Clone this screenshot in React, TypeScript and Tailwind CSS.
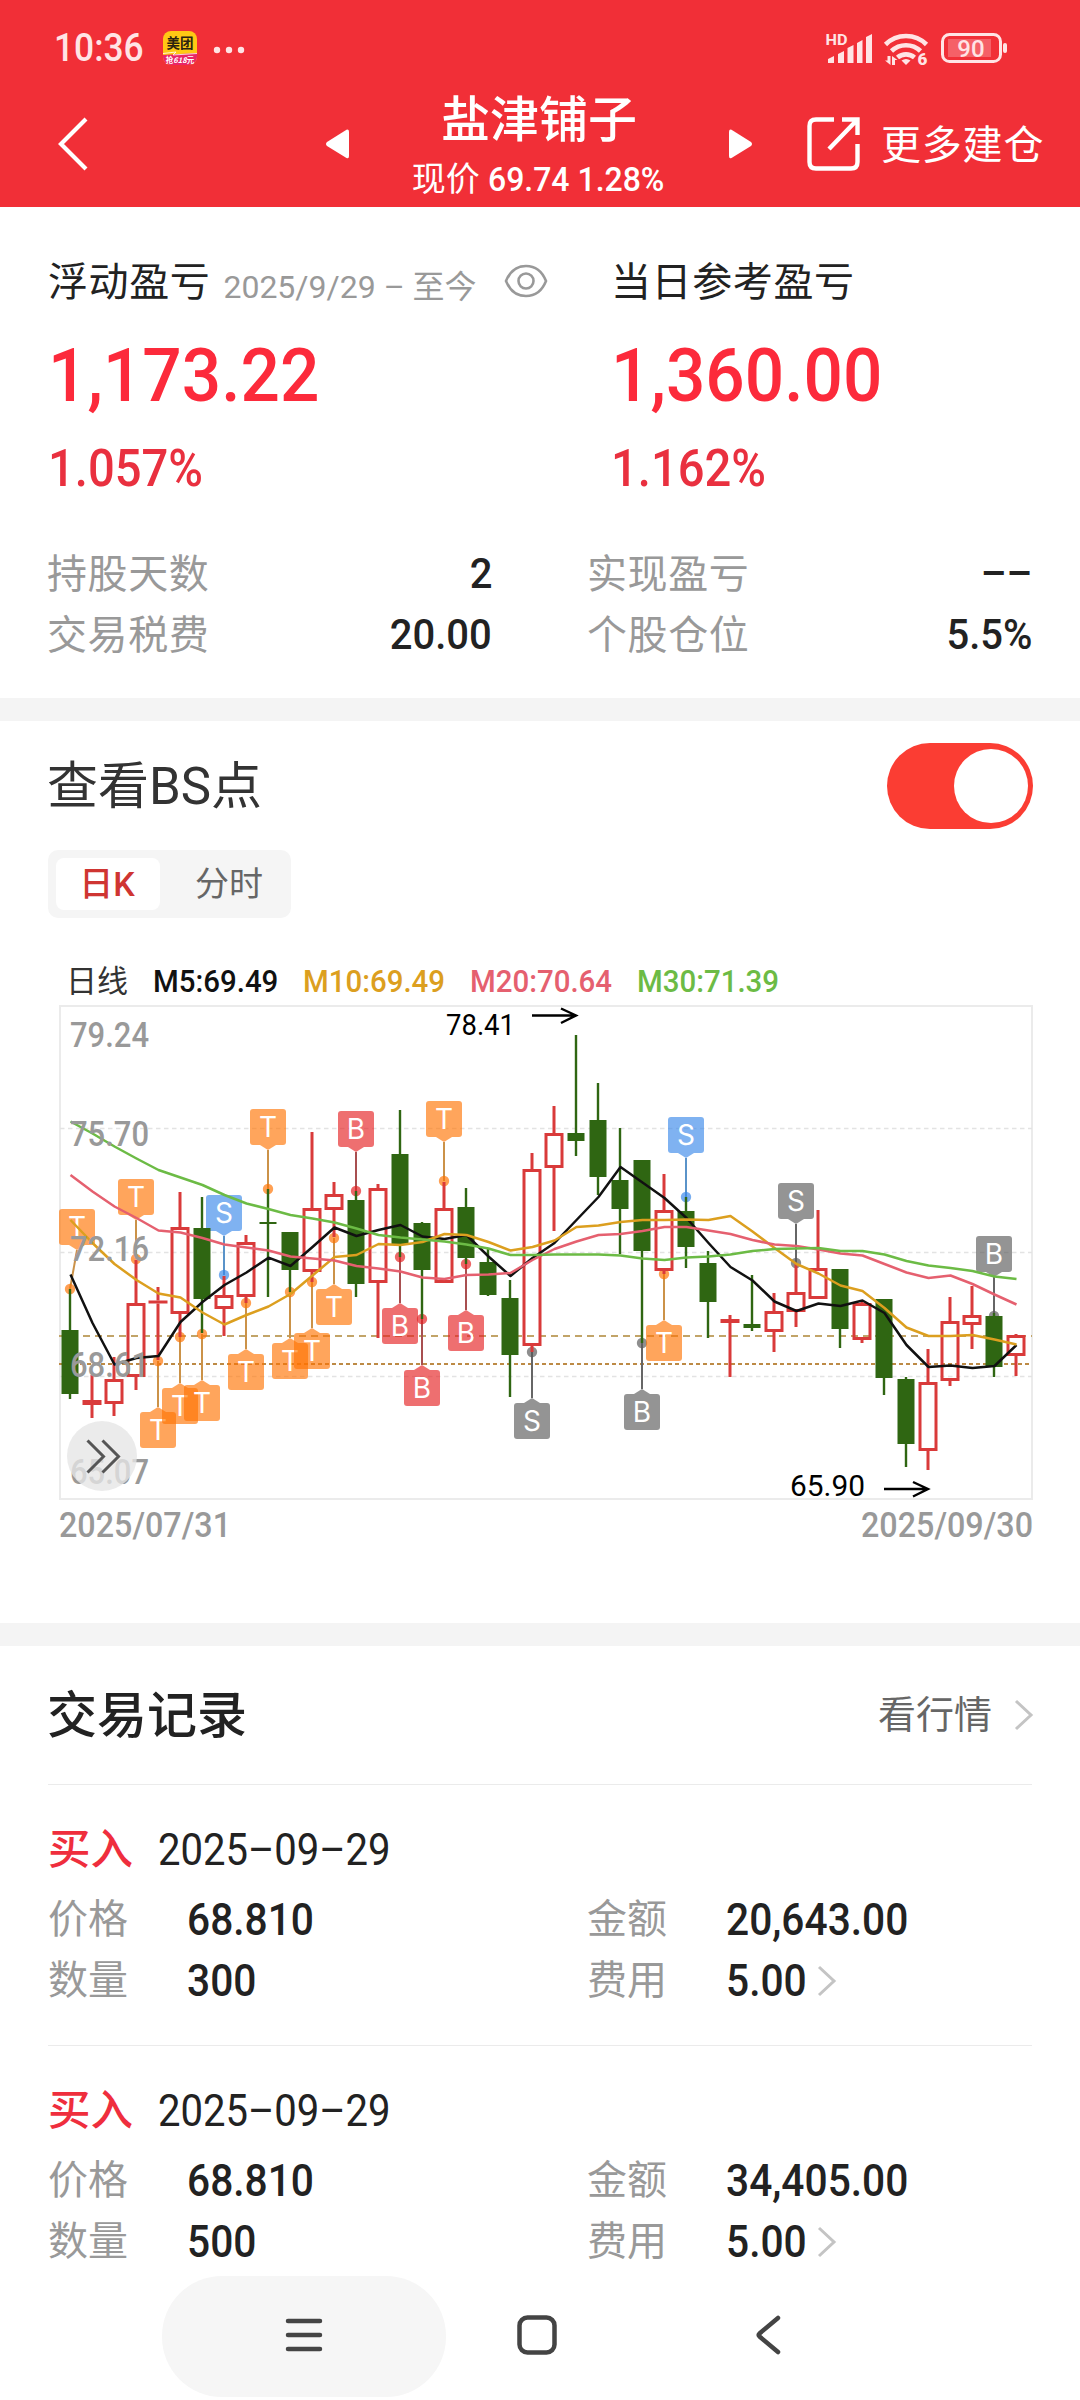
import type { ReactNode } from 'react'

type Candle = [high: number, top: number, bottom: number, low: number, up: boolean]
type MarkerKind = 'T' | 'B' | 'S' | 'b' | 's'

const STEP = 22
const candleX = (i: number) => 70 + i * STEP

const candles: Candle[] = [
  [289, 330, 394, 399, false], [375, 400, 405, 418, true], [357, 379, 404, 416, true], [260, 303, 377, 390, true],
  [287, 300.5, 303.5, 360, true], [192, 227, 314, 337, true], [197, 228, 299, 333, false], [276, 295, 309, 336, true],
  [235, 242, 297, 303, true], [189, 222, 224, 297, false], [232, 232, 270, 292, false], [132, 208, 272, 282, true],
  [182, 194, 210, 237, true], [191, 200, 284, 297, false], [184, 188, 283, 338, true], [110, 154, 245, 257, false],
  [222, 223, 270, 319, false], [182, 208, 283, 283, true], [188, 207, 258, 264, false], [248, 262, 295, 296, false],
  [280, 298, 355, 397, false], [153, 169, 346, 352, true], [106, 133, 168, 231, true], [35, 133, 141, 156, false],
  [83, 120, 177, 195, false], [128, 180, 209, 254, false], [160, 160, 251, 343, false], [174, 210, 271, 274, true],
  [197, 211, 247, 268, false], [251, 263, 302, 338, false], [315, 319, 323, 377, true], [275, 324, 328, 331, false],
  [293, 311, 332, 352, true], [263, 292, 312, 327, true], [210, 268, 299, 299, true], [269, 269, 329, 348, false],
  [302, 303, 340, 343, true], [299, 299, 378, 395, false], [377, 379, 444, 467, false], [349, 382, 451, 470, true],
  [297, 321, 381, 386, true], [286, 315, 325, 349, true], [313, 316, 367, 377, false], [334, 335, 356, 376, true],
]

const averages = [
  {
    color: '#111111',
    values: [274.5, 323, 364.5, 358, 356, 322, 302, 285, 272.5, 257.7, 266, 247, 227.5, 236, 230, 225, 236.5, 239, 235, 256.5, 276, 258, 243, 220, 197, 167, 182.5, 198, 218, 243, 267, 280.5, 301.5, 311, 303.5, 306, 300.5, 313, 345, 367, 365.5, 368, 366, 345],
  },
  {
    color: '#dc9f1f',
    values: [220, 243, 264, 280, 293.5, 297.5, 312.5, 324.5, 315, 306.5, 294, 275.5, 257, 255, 244, 245, 242, 234, 235, 242, 250.5, 247, 240.5, 227, 225.5, 222, 220, 220, 219.5, 220, 216, 231.5, 248, 264, 273.5, 285.5, 291, 308, 327.5, 336, 336, 335, 339.5, 344.5],
  },
  {
    color: '#e5606f',
    values: [175, 191.5, 206.5, 218, 230.5, 232.5, 238, 244.5, 247.5, 250.5, 256.5, 258.5, 260.5, 266, 268.5, 271.5, 277.5, 279, 275, 274.5, 273, 260, 249, 241.5, 235, 234, 231, 227, 227, 230.5, 234, 240, 244.5, 246, 249.5, 253.5, 255.5, 264, 272.5, 278, 275.5, 284, 294.5, 304.5],
  },
  {
    color: '#6cbb45',
    values: [121.5, 133.5, 146.5, 158.5, 170, 177.5, 185, 195, 203.5, 209, 215, 218.5, 222.5, 228.5, 235, 237.5, 239.5, 241.5, 244.5, 248.5, 255, 255, 254.5, 254.5, 254.5, 255.5, 258.5, 260, 257.5, 256.5, 254.5, 251, 249, 248.5, 248, 251, 251, 254.5, 261, 265.5, 268, 271, 276.5, 279],
  },
]

// lower case kinds are the grey (cleared) buy and sell points
const markerColors: Record<MarkerKind, { fill: string; line: string }> = {
  T: { fill: '#ff7302', line: '#cb9248' },
  B: { fill: '#e51f20', line: '#a84f50' },
  S: { fill: '#3887e9', line: '#5a93c9' },
  b: { fill: '#595959', line: '#666666' },
  s: { fill: '#595959', line: '#666666' },
}

const markers: { i: number; kind: MarkerKind; dot: number; above?: boolean; boxX?: number }[] = [
  { i: 0, kind: 'T', dot: 289, above: true, boxX: 77 },
  { i: 3, kind: 'T', dot: 259, above: true },
  { i: 4, kind: 'T', dot: 361 },
  { i: 5, kind: 'T', dot: 337 },
  { i: 6, kind: 'T', dot: 334 },
  { i: 7, kind: 'S', dot: 275, above: true },
  { i: 8, kind: 'T', dot: 303 },
  { i: 9, kind: 'T', dot: 189, above: true },
  { i: 10, kind: 'T', dot: 292 },
  { i: 11, kind: 'T', dot: 282 },
  { i: 12, kind: 'T', dot: 238 },
  { i: 13, kind: 'B', dot: 191, above: true },
  { i: 15, kind: 'B', dot: 257 },
  { i: 16, kind: 'B', dot: 319 },
  { i: 17, kind: 'T', dot: 181, above: true },
  { i: 18, kind: 'B', dot: 264 },
  { i: 21, kind: 's', dot: 352 },
  { i: 26, kind: 'b', dot: 343 },
  { i: 27, kind: 'T', dot: 274 },
  { i: 28, kind: 'S', dot: 197, above: true },
  { i: 33, kind: 's', dot: 263, above: true },
  { i: 42, kind: 'b', dot: 316, above: true },
]

const priceLabels = [
  { text: '79.24', y: 47 },
  { text: '75.70', y: 146 },
  { text: '72.16', y: 261 },
  { text: '68.61', y: 377 },
  { text: '65.07', y: 484 },
]

const records = [
  { date: '2025-09-29', price: '68.810', amount: '20,643.00', count: '300', fee: '5.00' },
  { date: '2025-09-29', price: '68.810', amount: '34,405.00', count: '500', fee: '5.00' },
]

function Marker({ i, kind, dot, above, boxX }: (typeof markers)[number]) {
  const x = candleX(i)
  const bx = boxX ?? x
  const top = above ? dot - 80 : dot + 51
  const { fill, line } = markerColors[kind]
  const tip = above ? top + 41 : top - 5
  const base = above ? top + 36 : top
  return (
    <g>
      <line x1={bx} y1={tip} x2={x} y2={dot} stroke={line} strokeWidth="2" />
      <circle cx={x} cy={dot} r="5.2" fill={fill} fillOpacity="0.68" />
      <g fill={fill} fillOpacity="0.644">
        <rect x={bx - 18} y={top} width="36" height="36" rx="3" />
        <path d={`M${bx - 8} ${base}H${bx + 8}L${bx} ${tip}Z`} />
      </g>
      <text x={bx} y={top + 28.3} textAnchor="middle" fontSize="28" fill="#fff" className="font-['Inter',sans-serif]">
        {kind.toUpperCase()}
      </text>
    </g>
  )
}

function CandleBar({ i, data }: { i: number; data: Candle }) {
  const [high, top, bottom, low, up] = data
  const x = candleX(i)
  if (!up) {
    return (
      <g fill="#2f6612">
        <rect x={x - 1.2} y={high} width="2.4" height={low - high} />
        <rect x={x - 8.5} y={top} width="17" height={bottom - top} />
      </g>
    )
  }
  const flat = bottom - top < 6
  return (
    <g fill="#d93a3a">
      <rect x={x - 1.5} y={high} width="3" height={top - high} />
      <rect x={x - 1.5} y={bottom} width="3" height={low - bottom} />
      {flat ? (
        <rect x={x - 9.5} y={top} width="19" height={bottom - top} />
      ) : (
        <rect x={x - 8} y={top + 1.5} width="16" height={bottom - top - 3} fill="none" stroke="#d93a3a" strokeWidth="3" />
      )}
    </g>
  )
}

function KLineChart() {
  return (
    <svg width="1080" height="550" viewBox="0 0 1080 550" className="block font-[Roboto,sans-serif]">
      <rect x="60" y="6" width="972" height="493" fill="none" stroke="#ebebeb" strokeWidth="2" />
      <g stroke="#e3e3e3" strokeWidth="1.3" strokeDasharray="4.5 3.5">
        <path d="M60 128.5H1032M60 252.5H1032M60 376.5H1032" />
      </g>
      <path d="M59 336H1032" stroke="#c2a468" strokeWidth="1.8" strokeDasharray="7 5" />
      <path d="M59 364H1032" stroke="#bd8a45" strokeWidth="2" strokeDasharray="4 3" />

      {markers.map((m) => (
        <Marker key={m.i} {...m} />
      ))}
      {candles.map((c, i) => (
        <CandleBar key={i} i={i} data={c} />
      ))}
      {averages.map((a) => (
        <polyline
          key={a.color}
          points={a.values.map((v, i) => `${candleX(i) + 0.5},${v}`).join(' ')}
          fill="none"
          stroke={a.color}
          strokeWidth="2.5"
          strokeLinejoin="round"
        />
      ))}

      <g fill="#999" fontSize="34.5" fontWeight="500">
        {priceLabels.map((p) => (
          <text key={p.text} x="70" y={p.y} textLength="79" lengthAdjust="spacingAndGlyphs">
            {p.text}
          </text>
        ))}
        <text x="59" y="537" textLength="172" lengthAdjust="spacingAndGlyphs">2025/07/31</text>
        <text x="861" y="537" textLength="172" lengthAdjust="spacingAndGlyphs">2025/09/30</text>
      </g>

      <g fontSize="30" fill="#000">
        <text x="446" y="35" textLength="69" lengthAdjust="spacingAndGlyphs">78.41</text>
        <text x="790" y="496" textLength="75" lengthAdjust="spacingAndGlyphs">65.90</text>
      </g>
      <g fill="none" stroke="#000" strokeWidth="2.4">
        <path d="M532 15.5H576M561 8.5L576 15.5L561 23" />
        <path d="M884 489H928M913 482L928 489L913 496.5" />
      </g>

      {/* expand button */}
      <circle cx="102" cy="456" r="35" fill="#e6e6e6" fillOpacity="0.78" />
      <path d="M87.5 440.5L103.5 456.5L87.5 472.5M102.5 440.5L118.5 456.5L102.5 472.5" fill="none" stroke="#555" strokeWidth="3" />
    </svg>
  )
}

function StatusBar() {
  return (
    <div className="flex h-[96px] items-center pl-[54px] pr-[72px] text-[#ffe4e5]">
      <span className="w-[109px] text-[38px] leading-none font-medium">
        <span className="inline-block origin-left scale-x-[0.93]">10:36</span>
      </span>
      <svg width="34" height="34" viewBox="0 0 34 34">
        <defs>
          <clipPath id="appIcon">
            <rect width="34" height="34" rx="8" />
          </clipPath>
        </defs>
        <g clipPath="url(#appIcon)">
          <rect width="34" height="34" fill="#ffc914" />
          <path d="M0 24L34 22V34H0Z" fill="#e92567" />
          <path d="M0 22.5L13 21L10 24L34 22.5" fill="none" stroke="#fff" strokeWidth="0.8" />
        </g>
        <text x="17" y="17" textAnchor="middle" fontSize="13.5" fontWeight="700" fill="#2b2410" className="font-['Noto_Sans_CJK_SC',sans-serif]">美团</text>
        <text x="17" y="32" textAnchor="middle" fontSize="7.5" fontWeight="700" fill="#fff" className="font-['Noto_Sans_CJK_SC',sans-serif]">
          抢<tspan fontStyle="italic">618</tspan>元
        </text>
      </svg>
      <svg width="32" height="8" viewBox="0 0 32 8" className="ml-4 mt-[3px]" fill="currentColor">
        <circle cx="4" cy="4" r="3.2" />
        <circle cx="16" cy="4" r="3.2" />
        <circle cx="28" cy="4" r="3.2" />
      </svg>

      <svg width="184" height="36" viewBox="825 30 184 36" className="ml-auto" fill="currentColor">
        <text x="826.5" y="44.5" fontSize="15" fontWeight="700" textLength="22" lengthAdjust="spacingAndGlyphs">HD</text>
        <path d="M829 63V59L835 56V63ZM839 63V54L845 51V63ZM848.5 63V48L854.5 45V63ZM858 63V43L863.5 40V63ZM867 63V37L873 34V63Z" />
        <g fill="none" stroke="currentColor" strokeWidth="4.6">
          <path d="M886.500 44.5A29 29 0 0 1 927.5 44.5" />
          <path d="M892.5 51A21 21 0 0 1 921.5 51" />
          <path d="M898.5 57.5A13 13 0 0 1 915.5 57.5" />
        </g>
        <path d="M902.5 60.500Q907 57.5 911.500 60.5L907 65Z" />
        <path d="M888.5 56H891.5V65L886 60.5H888.5ZM893 65V56L898.5 60H896V65Z" />
        <text x="918.5" y="65" fontSize="17" fontWeight="900">6</text>
        <rect x="943.5" y="34.5" width="58" height="27" rx="7" fill="none" stroke="currentColor" strokeWidth="3" />
        <rect x="949" y="39" width="43" height="18" fillOpacity="0.28" />
        <rect x="1004" y="43" width="4" height="10" rx="2" />
        <text x="972" y="56.500" textAnchor="middle" fontSize="24" fontWeight="500">90</text>
      </svg>
    </div>
  )
}

function Header() {
  return (
    <header className="h-[207px] bg-[#f12f37] text-white">
      <StatusBar />
      <div className="flex h-[96px] items-center pl-[57px] pr-[34px]">
        <svg width="32" height="56" viewBox="0 0 32 56" fill="none" stroke="currentColor" strokeWidth="4.2">
          <path d="M29 3L4 28L29 53" />
        </svg>
        <svg width="24" height="30" viewBox="0 0 24 30" className="ml-[237px]" fill="currentColor">
          <path d="M20.5 0.7Q23 0 23 3V27Q23 30 20.5 29L1 17Q-1 15 1 13Z" />
        </svg>
        <div className="flex w-[378px] flex-col items-center">
          <h1 className="mt-[5px] text-[49px] leading-[60px] font-medium">盐津铺子</h1>
          <p className="mt-[4px] text-[34px] leading-[48px] whitespace-nowrap">
            现价 <span className="inline-block w-[178px] origin-left scale-x-[0.94] font-medium">69.74 1.28%</span>
          </p>
        </div>
        <svg width="24" height="30" viewBox="0 0 24 30" fill="currentColor">
          <path d="M3.5 0.7Q1 0 1 3V27Q1 30 3.5 29L23 17Q25 15 23 13Z" />
        </svg>
        <svg width="54" height="54" viewBox="0 0 54 54" className="ml-[55px]" fill="none" stroke="currentColor" strokeWidth="4.4">
          <path d="M27 2.5H9Q2.5 2.5 2.5 9V45Q2.5 51.5 9 51.5H44Q50.5 51.5 50.5 45V27M35 2.5H50.5V18M50 3L22 32" />
        </svg>
        <span className="ml-[20px] mt-[3px] text-[40px] leading-none tracking-[0.8px] whitespace-nowrap">更多建仓</span>
      </div>
    </header>
  )
}

function Stat({ label, children }: { label: string; children: ReactNode }) {
  return (
    <div className="flex h-[61px] items-center justify-between">
      <span className="mt-[3px] -ml-px text-[40px] leading-none tracking-[0.6px] text-[#999]">{label}</span>
      <span className="origin-right scale-x-[0.93] text-[43px] leading-none font-medium text-[#222]">{children}</span>
    </div>
  )
}

function Profit({ amount, percent }: { amount: string; percent: string }) {
  return (
    <>
      <p className="mt-[33px] origin-left scale-x-[0.925] text-[75px] leading-[66px] font-medium text-[#fc2a3b]">{amount}</p>
      <p className="mt-[36px] origin-left scale-x-[0.925] text-[51px] leading-[50px] font-medium text-[#e9303f]">{percent}</p>
    </>
  )
}

function Summary() {
  return (
    <section className="h-[491px] px-12 pt-[46px]">
      <div className="flex">
        <div className="w-[563px]">
          <div className="flex h-14 items-center">
            <span className="mt-[3px] text-[40px] leading-none tracking-[0.6px] text-[#222]">浮动盈亏</span>
            <span className="ml-[13px] mt-[11px] text-[32px] leading-none whitespace-nowrap text-[#999]">2025/9/29 – 至今</span>
            <svg width="44" height="34" viewBox="0 0 44 34" className="ml-[27px]" fill="none" stroke="#999" strokeWidth="2.6">
              <path d="M2 17Q8 2 22 2Q36 2 42 17Q36 32 22 32Q8 32 2 17Z" />
              <circle cx="22" cy="17" r="7.5" />
            </svg>
          </div>
          <Profit amount="1,173.22" percent="1.057%" />
        </div>
        <div>
          <div className="flex h-14 items-center">
            <span className="mt-[3px] text-[40px] leading-none tracking-[0.6px] text-[#222]">当日参考盈亏</span>
          </div>
          <Profit amount="1,360.00" percent="1.162%" />
        </div>
      </div>
      <div className="mt-[49px] grid grid-cols-[444px_444px] gap-x-24">
        <Stat label="持股天数">2</Stat>
        <Stat label="实现盈亏">––</Stat>
        <Stat label="交易税费">20.00</Stat>
        <Stat label="个股仓位">5.5%</Stat>
      </div>
    </section>
  )
}

function Chevron() {
  return (
    <svg width="20" height="32" viewBox="0 0 20 32" fill="none" stroke="#c4c4c4" strokeWidth="3">
      <path d="M2 2L17 16L2 30" />
    </svg>
  )
}

function BsPoints() {
  return (
    <section className="h-[902px]">
      <div className="flex h-[128px] items-center justify-between pr-[47px] pl-[47px]">
        <h2 className="mt-[3px] text-[51px] leading-none text-[#333]">查看BS点</h2>
        <button className="mt-px flex h-[86px] w-[146px] items-center justify-end rounded-full bg-[#fb3d33] pr-[5px]" aria-label="查看BS点">
          <span className="size-[74px] rounded-full bg-white" />
        </button>
      </div>
      <div className="mt-px ml-12 flex h-[68px] w-[243px] items-center rounded-[10px] bg-[#f5f5f5] pl-2">
        <span className="flex h-[52px] w-[104px] items-center justify-center rounded-[8px] bg-white pr-[2px] text-[34px] leading-none font-medium text-[#cf3532]">日K</span>
        <span className="ml-[35px] text-[34px] leading-none text-[#666]">分时</span>
      </div>
      <div className="mt-[44px] flex h-[38px] items-center pl-[66px] text-[32px] leading-none font-medium whitespace-nowrap">
        <span className="w-[87px] text-[31px] font-normal text-[#333]">日线</span>
        <span className="w-[150px] origin-left scale-x-[0.92] text-[#111]">M5:69.49</span>
        <span className="w-[167px] origin-left scale-x-[0.92] text-[#dc9f1f]">M10:69.49</span>
        <span className="w-[167px] origin-left scale-x-[0.92] text-[#e5606f]">M20:70.64</span>
        <span className="origin-left scale-x-[0.92] text-[#6cbb45]">M30:71.39</span>
      </div>
      <KLineChart />
    </section>
  )
}

function Field({ label, value, link }: { label: string; value: string; link?: boolean }) {
  return (
    <div className="flex h-[61px] items-center">
      <span className="mt-px w-[139px] text-[40px] leading-none text-[#999]">{label}</span>
      <span className="origin-left scale-x-[0.925] text-[44px] leading-none font-medium text-[#222]">{value}</span>
      {link && (
        <span className="ml-[4px] pt-px">
          <Chevron />
        </span>
      )}
    </div>
  )
}

function Records() {
  return (
    <section className="h-[630px] overflow-hidden px-12">
      <div className="-mr-[2px] flex h-[138px] items-center justify-between">
        <h2 className="mt-[2px] -ml-px text-[50px] leading-none font-medium text-[#222]">交易记录</h2>
        <div className="flex items-center gap-[22px] text-[38px] leading-none text-[#666]">
          看行情
          <Chevron />
        </div>
      </div>
      {records.map((r, i) => (
        <div key={i} className="h-[261px] border-t border-[#ebebeb] pt-[32px]">
          <div className="flex h-[66px] items-center">
            <span className="w-[110px] text-[42.5px] leading-none font-medium text-[#ef2e3d]">买入</span>
            <span className="origin-left scale-x-[0.91] text-[44px] leading-none text-[#222]">{r.date.replaceAll('-', '–')}</span>
          </div>
          <div className="mt-[6px] grid grid-cols-[539px_444px]">
            <Field label="价格" value={r.price} />
            <Field label="金额" value={r.amount} />
            <Field label="数量" value={r.count} />
            <Field label="费用" value={r.fee} link />
          </div>
        </div>
      ))}
    </section>
  )
}

function NavBar() {
  return (
    <nav className="flex h-[124px] overflow-hidden bg-white pl-[162px]">
      <div className="flex h-[121px] w-[284px] items-center justify-center rounded-[60px] bg-[#f6f6f6]">
        <svg width="38" height="36" viewBox="0 0 38 36" className="-mt-[3px]" stroke="#444" strokeWidth="4.5" strokeLinecap="round">
          <path d="M3 4H35M3 18H35M3 32H35" />
        </svg>
      </div>
      <div className="flex h-[118px] items-center">
        <svg width="42" height="42" viewBox="0 0 42 42" className="ml-[70px]" fill="none" stroke="#444" strokeWidth="4.5">
          <rect x="3.5" y="3.5" width="35" height="35" rx="8" />
        </svg>
        <svg width="28" height="42" viewBox="0 0 28 42" className="ml-[196px]" fill="none" stroke="#444" strokeWidth="4.5" strokeLinecap="round" strokeLinejoin="round">
          <path d="M24 4L5.5 19.5Q4 21 5.5 22.5L24 38" />
        </svg>
      </div>
    </nav>
  )
}

export default function App() {
  return (
    <div className="h-[2400px] w-[1080px] overflow-hidden bg-white font-[Roboto,'Noto_Sans_CJK_SC',sans-serif]">
      <Header />
      <Summary />
      <div className="h-[23px] bg-[#f4f4f4]" />
      <BsPoints />
      <div className="h-[23px] bg-[#f4f4f4]" />
      <Records />
      <NavBar />
    </div>
  )
}
